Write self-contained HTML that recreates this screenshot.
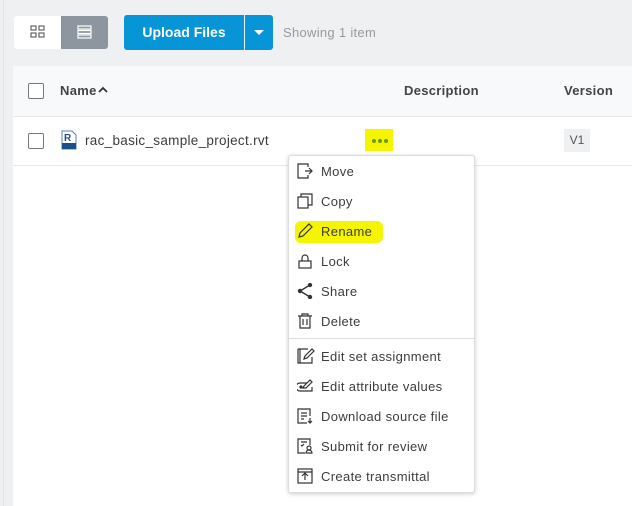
<!DOCTYPE html><html><head><style>
body{margin:0;width:632px;height:506px;background:#eef0f2;font-family:"Liberation Sans",sans-serif;position:relative;overflow:hidden;color:#3c3c3c}
.a{position:absolute}
.t{font-size:13px;color:#3c3c3c;letter-spacing:.3px}
.mi{position:absolute;left:0;height:30px;width:185px}
.mi svg{position:absolute;left:8px;top:6px}
.mi span{position:absolute;left:32px;top:7px;font-size:13px;color:#3c3c3c;letter-spacing:.35px}
</style></head><body>
<div class="a" style="left:3px;top:0;width:1px;height:506px;background:#e2e4e6"></div>
<div class="a" style="left:14px;top:16px;width:47px;height:33px;background:#fff;border-radius:3px 0 0 3px"></div>
<svg class="a" style="left:30px;top:25px" width="16" height="14" fill="none" stroke="#666" stroke-width="1.2"><rect x="1" y="1" width="5" height="4"/><rect x="9" y="1" width="5" height="4"/><rect x="1" y="8" width="5" height="4"/><rect x="9" y="8" width="5" height="4"/></svg>
<div class="a" style="left:61px;top:16px;width:47px;height:33px;background:#8d969e;border-radius:0 3px 3px 0"></div>
<svg class="a" style="left:77px;top:25px" width="16" height="14" fill="none" stroke="#fff" stroke-width="1.2"><rect x="1" y="1" width="13" height="3"/><rect x="1" y="5.5" width="13" height="3"/><rect x="1" y="10" width="13" height="3"/></svg>
<div class="a" style="left:124px;top:15px;width:120px;height:35px;background:#0696d7;border-radius:3px 0 0 3px;color:#fff;font-size:14px;font-weight:bold;text-align:center;line-height:35px">Upload Files</div>
<div class="a" style="left:245px;top:15px;width:28px;height:35px;background:#0696d7;border-radius:0 3px 3px 0"></div>
<div class="a" style="left:254px;top:30px;border:5px solid transparent;border-top:5px solid #fff"></div>
<div class="a t" style="left:283px;top:25px;color:#999">Showing 1 item</div>
<div class="a" style="left:13px;top:66px;width:619px;height:50px;background:#f8f9fa;border-bottom:1px solid #e6e8ea"></div>
<div class="a" style="left:13px;top:117px;width:619px;height:389px;background:#fff"></div>
<div class="a" style="left:13px;top:165px;width:619px;height:1px;background:#e6e8ea"></div>
<div class="a" style="left:28px;top:83px;width:14px;height:14px;border:1px solid #777;border-radius:2px;background:#fff"></div>
<div class="a t" style="left:60px;top:83px;font-weight:bold;color:#444">Name</div>
<svg class="a" style="left:98px;top:86px" width="10" height="8"><path d="M1 6L5 2L9 6" fill="none" stroke="#333" stroke-width="1.8"/></svg>
<div class="a t" style="left:404px;top:83px;font-weight:bold;color:#444">Description</div>
<div class="a t" style="left:564px;top:83px;font-weight:bold;color:#444">Version</div>
<div class="a" style="left:28px;top:133px;width:14px;height:14px;border:1px solid #777;border-radius:2px;background:#fff"></div>
<svg class="a" style="left:61px;top:130px" width="16" height="20"><path d="M1 1H11L15 5V19H1Z" fill="#fff" stroke="#5a7fa8"/><text x="3" y="11" font-size="10" font-weight="bold" fill="#1f4f8a" font-family="Liberation Sans">R</text><rect x="1" y="13" width="14" height="6" fill="#1f4f8a"/></svg>
<div class="a t" style="left:85px;top:133px;font-size:13.5px">rac_basic_sample_project.rvt</div>
<div class="a" style="left:365px;top:129px;width:28px;height:22px;background:#f5f500"></div>
<svg class="a" style="left:371px;top:138px" width="18" height="6" fill="#6a9a1a"><circle cx="3" cy="3" r="2"/><circle cx="9" cy="3" r="2"/><circle cx="15" cy="3" r="2"/></svg>
<div class="a" style="left:564px;top:129px;width:26px;height:23px;background:#eef0f2;font-size:12px;color:#555;text-align:center;line-height:23px">V1</div>
<div class="a" style="left:288px;top:155px;width:185px;height:336px;background:#fff;border:1px solid #ddd;border-radius:3px;box-shadow:0 1px 4px rgba(0,0,0,.2)">
<div class="a" style="left:6px;top:65px;width:88px;height:22px;background:#f5f500;border-radius:6px"></div>
<div class="mi" style="top:1px"><svg width="16" height="16" fill="none" stroke="#333" stroke-width="1.2"><path d="M11 4V1H1V15H11V12M8 8H15M12 5L15 8L12 11"/></svg><span>Move</span></div>
<div class="mi" style="top:31px"><svg width="16" height="16" fill="none" stroke="#333" stroke-width="1.2"><rect x="1" y="4" width="10" height="11"/><path d="M4 4V1H15V12H11"/></svg><span>Copy</span></div>
<div class="mi" style="top:61px"><svg width="16" height="16" fill="none" stroke="#333" stroke-width="1.2"><path d="M2 14L3 10L12 1L15 4L6 13Z"/></svg><span>Rename</span></div>
<div class="mi" style="top:91px"><svg width="16" height="16" fill="none" stroke="#333" stroke-width="1.2"><rect x="2" y="8" width="12" height="7"/><path d="M5 8V5A3 3 0 0 1 11 5V8"/></svg><span>Lock</span></div>
<div class="mi" style="top:121px"><svg width="16" height="16" fill="#333" stroke="#333" stroke-width="1.4"><path d="M13 2L3 8L13 14" fill="none"/><circle cx="13" cy="2" r="1.5"/><circle cx="3" cy="8" r="1.5"/><circle cx="13" cy="14" r="1.5"/></svg><span>Share</span></div>
<div class="mi" style="top:151px"><svg width="16" height="16" fill="none" stroke="#333" stroke-width="1.2"><path d="M1 3H15M5 3V1H11V3M3 3V15H13V3M6 6V12M10 6V12"/></svg><span>Delete</span></div>
<div class="a" style="left:0;top:182px;width:185px;height:1px;background:#ddd"></div>
<div class="mi" style="top:186px"><svg width="18" height="16" fill="none" stroke="#333" stroke-width="1.2"><path d="M1 1H11M1 1V15H15V9M3 1V15M7 11L8 8L15 1L17 3L10 10Z"/></svg><span>Edit set assignment</span></div>
<div class="mi" style="top:216px"><svg width="18" height="16" fill="none" stroke="#333" stroke-width="1.2"><path d="M10 5H3A3 3 0 0 0 3 13H15V9M6 10L7 8L13 2L15 4L9 10Z"/><circle cx="4" cy="9" r="1" fill="#333"/></svg><span>Edit attribute values</span></div>
<div class="mi" style="top:246px"><svg width="18" height="16" fill="none" stroke="#333" stroke-width="1.2"><path d="M10 15H1V1H13V8M4 5H10M4 8H10M4 11H7M13 10V15M11 13L13 15L15 13"/></svg><span>Download source file</span></div>
<div class="mi" style="top:276px"><svg width="18" height="16" fill="none" stroke="#333" stroke-width="1.2"><path d="M8 15H1V1H13V7M4 4H10M4 7L5 8L7 6"/><circle cx="12" cy="10" r="2"/><path d="M9 15A3 3 0 0 1 15 15Z"/></svg><span>Submit for review</span></div>
<div class="mi" style="top:306px"><svg width="16" height="16" fill="none" stroke="#333" stroke-width="1.2"><rect x="1" y="1" width="14" height="14"/><path d="M1 4H15M8 12V6M5 8L8 5L11 8"/></svg><span>Create transmittal</span></div>
</div>
</body></html>
